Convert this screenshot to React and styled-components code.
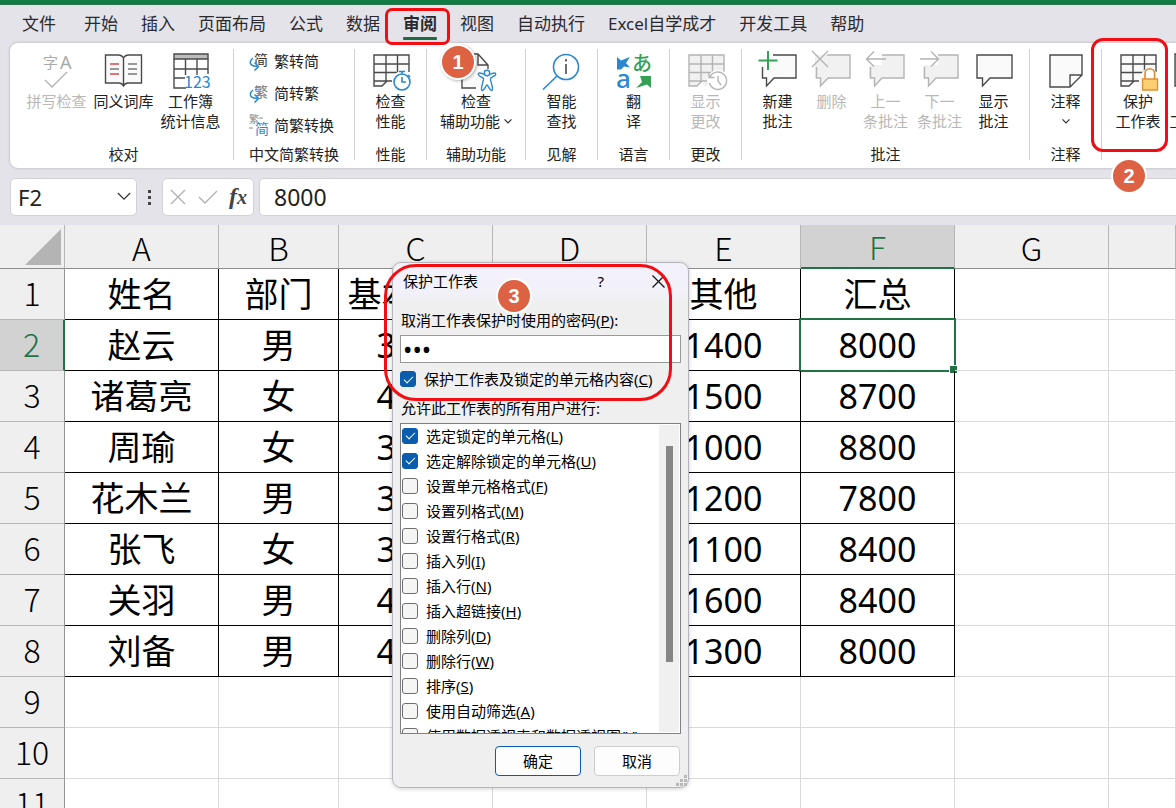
import React from "react";
import styled, { createGlobalStyle, css } from "styled-components";

const sans = '"Noto Sans", "Noto Sans CJK SC", sans-serif';
const cjk = '"Noto Sans CJK SC", "Noto Sans", sans-serif';
const green = "#217346";

const GlobalStyle = createGlobalStyle`
  * { box-sizing: border-box; }
  body { margin: 0; background: #fff; font-family: ${sans}; color: #222; }
  button, input { font: inherit; color: inherit; }
  button { background: none; border: 0; padding: 0; }
`;

const Window = styled.div`
  position: relative;
  display: flex;
  flex-direction: column;
  height: 100vh;
  overflow: hidden;
  background: #e4e3ea;
`;

const TopStrip = styled.header`
  flex: none;
  height: 5px;
  background: #107c41;
  border-bottom: 1px solid #2c7350;
`;

const TabBar = styled.nav`
  flex: none;
  display: flex;
  align-items: stretch;
  gap: 23px;
  height: 38px;
  padding-left: 22px;
`;

const Tab = styled.button`
  position: relative;
  flex: none;
  font-size: 17px;
  line-height: 36px;
  white-space: nowrap;
  color: #2a2a2e;
  &:first-child { margin-right: 5px; }
  ${(p) => p.$active && css`
    font-weight: 700;
    &::after {
      content: "";
      position: absolute;
      left: 0;
      right: 0;
      bottom: 3px;
      height: 3px;
      border-radius: 1px;
      background: #1c6b41;
    }
  `}
`;

const Ribbon = styled.section`
  flex: none;
  display: flex;
  height: 125px;
  margin-left: 10px;
  padding: 6px 0 8px;
  background: #fff;
  border-radius: 8px 0 0 8px;
  box-shadow: 0 0 3px rgba(0, 0, 0, 0.25);
  overflow: hidden;
`;

const Group = styled.div`
  flex: none;
  display: flex;
  flex-direction: column;
  align-items: ${(p) => (p.$open ? "flex-start" : "center")};
  justify-content: space-between;
  width: ${(p) => p.$width}px;
  padding-left: ${(p) => p.$indent || 0}px;
  border-right: ${(p) => (p.$open ? 0 : "1px solid #d0d0d0")};
`;

const GroupItems = styled.div`
  display: flex;
`;

const GroupLabel = styled.div`
  font-size: 15px;
  line-height: 12px;
`;

const BigButton = styled.button`
  flex: none;
  display: flex;
  flex-direction: column;
  align-items: center;
  width: ${(p) => p.$width || 54}px;
  padding-top: 1px;
  font-size: 15px;
  line-height: 20px;
  white-space: nowrap;
  color: ${(p) => (p.disabled ? "#b8b8b8" : "#222")};
`;

const BigIcon = styled.svg`
  display: block;
  flex: none;
  width: 44px;
  height: 41px;
  overflow: visible;
  fill: none;
  stroke: ${(p) => (p.$muted ? "#b4b4b4" : "#4a4a4a")};
  stroke-width: 1.4;
  text { stroke: none; }
`;

const LabelLine = styled.span`
  display: flex;
  align-items: center;
  gap: 4px;
  min-height: 20px;
`;

const SmallList = styled.div`
  display: flex;
  flex-direction: column;
  gap: 8px;
  width: 90px;
`;

const SmallButton = styled.button`
  display: flex;
  align-items: center;
  gap: 5px;
  height: 24px;
  font-size: 15px;
  line-height: 22px;
  white-space: nowrap;
  svg { width: 20px; height: 22px; overflow: visible; flex: none; }
`;

const FormulaBar = styled.section`
  flex: none;
  display: flex;
  align-items: center;
  height: 57px;
  padding: 0 0 0 10px;
`;

const barBox = css`
  display: flex;
  align-items: center;
  height: 38px;
  background: #fff;
  border: 1px solid #d2d1d8;
  border-radius: 5px;
`;

const NameBox = styled.div`
  ${barBox}
  width: 127px;
  padding: 0 5px 0 7px;
  input {
    flex: 1;
    min-width: 0;
    border: 0;
    padding: 0;
    font-size: 22px;
    outline: 0;
    background: none;
  }
`;

const BarDots = styled.svg`
  width: 25px;
  height: 38px;
  flex: none;
`;

const FxBox = styled.div`
  ${barBox}
  width: 92px;
  margin-right: 5px;
  padding: 0 6px;
  justify-content: space-between;
  button { display: flex; }
`;

const FxMark = styled.span`
  font: italic 700 24px/30px "Liberation Serif", serif;
  color: #444;
  small { font-size: 20px; }
`;

const FormulaBox = styled.div`
  ${barBox}
  flex: 1;
  padding-left: 14px;
  border-radius: 5px 0 0 5px;
  border-right: 0;
  input {
    width: 100%;
    border: 0;
    padding: 0;
    font-size: 23px;
    outline: 0;
    background: none;
  }
`;

const Sheet = styled.main`
  flex: 1;
  min-height: 0;
  overflow: hidden;
  background: #fff;
`;

const Grid = styled.table`
  width: 100%;
  table-layout: fixed;
  border-collapse: separate;
  border-spacing: 0;
  color: #000;
`;

const HeadCell = styled.th`
  height: ${(p) => (p.$row ? 51 : 44)}px;
  padding: 0 0 ${(p) => (p.$row ? 4 : 0)}px;
  font-family: ${cjk};
  font-size: 32px;
  font-weight: 300;
  line-height: 40px;
  text-align: center;
  vertical-align: middle;
  color: ${(p) => (p.$on ? green : "#000")};
  background: ${(p) => (p.$on ? "#d2d2d2" : "#efefef")};
  border-right: 1px solid ${(p) => (p.$row ? "#949494" : "#b6b6b6")};
  border-bottom: 1px solid ${(p) => (p.$row ? "#b6b6b6" : "#8c8c8c")};
  ${(p) => p.$on && p.$row && `border-right: 2px solid ${green};`}
  ${(p) => p.$on && !p.$row && `border-bottom: 2px solid ${green};`}
`;

const Corner = styled.svg`
  display: block;
  width: 64px;
  height: 43px;
`;

const Cell = styled.td`
  position: relative;
  height: 51px;
  padding: 0 0 1px;
  font-size: 34px;
  line-height: 44px;
  text-align: center;
  vertical-align: middle;
  white-space: nowrap;
  border-right: 1px solid ${(p) => (p.$data ? "#000" : "#dadada")};
  border-bottom: 1px solid ${(p) => (p.$data ? "#000" : "#dadada")};
`;

const Selection = styled.span`
  position: absolute;
  inset: -2px;
  border: 2px solid ${green};
  &::after {
    content: "";
    position: absolute;
    right: -4px;
    bottom: -4px;
    width: 7px;
    height: 7px;
    background: ${green};
    border: 1px solid #fff;
  }
`;

const Dialog = styled.form`
  position: absolute;
  left: 392px;
  top: 262px;
  width: 297px;
  display: flex;
  flex-direction: column;
  padding: 0 7px 11px;
  background: linear-gradient(#f3f1f9 0, #f2f0f8 30px, #efefef 40px);
  border: 1px solid #b5b5bb;
  border-radius: 9px;
  box-shadow: 0 1px 4px rgba(0, 0, 0, 0.18);
  font-size: 15px;
  line-height: 20px;
  color: #000;
`;

const TitleRow = styled.div`
  display: flex;
  align-items: center;
  height: 36px;
  padding: 0 16px 0 3px;
  h2 { flex: 1; margin: 0; font-size: 15px; font-weight: 400; }
  button { display: flex; }
`;

const HelpButton = styled.button`
  margin-right: 48px;
`;

const FieldLabel = styled.label`
  display: block;
  height: 36px;
  padding-top: 11px;
  padding-left: 1px;
`;

const Password = styled.input`
  width: 281px;
  height: 28px;
  padding: 0 2px;
  border: 1px solid #999;
  background: #fff;
  font-size: 25px;
  outline: 0;
`;

const Check = styled.input`
  appearance: none;
  flex: none;
  display: grid;
  place-items: center;
  width: 16px;
  height: 16px;
  margin: 0;
  border: 1px solid #6e6e6e;
  border-radius: 3px;
  background: #f5f5f5;
  &:checked { background: #0a5cad; border-color: #0a5cad; }
  &:checked::after {
    content: "";
    width: 8px;
    height: 4px;
    margin-bottom: 2px;
    border-left: 1px solid #fff;
    border-bottom: 1px solid #fff;
    transform: rotate(-45deg);
  }
`;

const CheckRow = styled.label`
  flex: none;
  display: flex;
  align-items: center;
  gap: 8px;
  height: ${(p) => (p.$main ? 32 : 25)}px;
  white-space: nowrap;
`;

const ListCaption = styled.div`
  height: 28px;
  padding-top: 3px;
  padding-left: 1px;
`;

const ListBox = styled.div`
  display: flex;
  width: 281px;
  height: 311px;
  border: 1px solid #7f8083;
  background: #fff;
  overflow: hidden;
`;

const Options = styled.div`
  flex: 1;
  display: flex;
  flex-direction: column;
  margin-top: -1px;
  padding-left: 1px;
`;

const ScrollTrack = styled.div`
  width: 20px;
  margin: 1px;
  padding: 21px 6px 0 7px;
  background: #f0f0f0;
`;

const ScrollThumb = styled.div`
  height: 216px;
  background: #868686;
`;

const Actions = styled.div`
  display: flex;
  justify-content: flex-end;
  gap: 13px;
  padding: 12px 1px 0 0;
`;

const ActionButton = styled.button`
  width: 86px;
  height: 30px;
  background: #fdfdfd;
  border: 1px solid ${(p) => (p.$primary ? "#0a5cad" : "#cdcdcd")};
  border-radius: 4px;
`;

const Grip = styled.svg`
  position: absolute;
  right: 1px;
  bottom: 1px;
  width: 12px;
  height: 12px;
  fill: #b9b9b9;
`;

const Frame = styled.div`
  position: absolute;
  left: ${(p) => p.$x}px;
  top: ${(p) => p.$y}px;
  width: ${(p) => p.$w}px;
  height: ${(p) => p.$h}px;
  border: 3px solid #f20d12;
  border-radius: ${(p) => p.$r}px;
  pointer-events: none;
`;

const Marker = styled.div`
  position: absolute;
  left: ${(p) => p.$x}px;
  top: ${(p) => p.$y}px;
  width: 36px;
  height: 36px;
  border: 2px solid #fff;
  border-radius: 50%;
  background: #dc6243;
  box-shadow: ${(p) => (p.$raised ? "1px 1px 3px rgba(0, 0, 0, 0.3)" : "none")};
  color: #fff;
  font: 700 20px/32px "Liberation Sans", sans-serif;
  text-align: center;
`;

const Chevron = ({ size = 8 }) => (
  <svg width={size} height={size} viewBox="0 0 8 8" fill="none" stroke="#333" strokeWidth={size > 10 ? 0.7 : 1.2}>
    <path d="M.5 2.3 4 5.8 7.5 2.3" />
  </svg>
);

const TableShape = ({ muted }) => (
  <>
    <path d="M5 5H40V36H20L18 31 14 36H5Z" fill={muted ? "#f1f1f1" : "#fafafa"} stroke="none" />
    <path d="M40 22V5H5V36H13L18 31H23M5 14H40M5 22.500H30M5 31H18M17 5V31M28.500 5V25" />
  </>
);

const Balloon = ({ muted, cut }) => (
  <>
    <path d="M5 5H40V28H18L10.500 36V28H5Z" fill={muted ? "#f1f1f1" : "#fafafa"} stroke="none" />
    <path d={cut ? "M17 5H40V28H18L10.500 36V28H6.500V17" : "M5 5H40V28H18L10.500 36V28H5Z"} />
  </>
);

const drawings = {
  spelling: (
    <>
      <text x="8" y="18" fontSize="15" fill="#a9a9a9" fontFamily={cjk}>字</text>
      <text x="25" y="19" fontSize="18" fill="#a9a9a9" fontFamily={sans}>A</text>
      <path d="M10 30 17 37 32 22" />
    </>
  ),
  book: (
    <>
      <path d="M21.500 8Q20 5 16 5H3.500V33H17Q20 33 21.500 36Q23 33 26 33H39.500V5H27Q23 5 21.500 8V35" fill="#fafafa" />
      <path d="M8 14H17M8 24H17" stroke="#d8494f" />
      <path d="M8 19H17M26 14H35M26 19H35M26 24H35" stroke="#777" />
    </>
  ),
  stats: (
    <>
      <path d="M5 4H39V9H5Z" fill="#bdbdbd" />
      <path d="M5 9V38H17M39 9V24M5 19H39M5 28H16M16.500 9V25M28 9V25" />
      <text x="15" y="38" fontSize="16" fill="#2b88d0" fontFamily={cjk}>123</text>
    </>
  ),
  perf: (
    <>
      <TableShape />
      <circle cx="33" cy="31" r="10" fill="#fff" stroke="none" />
      <g stroke="#2b88d0" strokeWidth="1.6">
        <circle cx="33" cy="32" r="8" fill="#fff" />
        <path d="M33 27V32H37M30 21.500H36M33 21.500V24M39 25 41 27" />
      </g>
    </>
  ),
  access: (
    <>
      <path d="M8 4H24L34 15V38H8Z" fill="#fafafa" stroke="none" />
      <path d="M22 38H8V4H24L34 15V19M24 4V15H34" />
      <path d="M33 25C29 25 26 21.500 24.500 23.500S29 27.500 29.500 28.500 26 40 28 40.500 32 35 33 35 36 41 38 40.500 36 30 36.500 28.500 43 25.500 41.500 23.500 37 25 33 25Z" fill="#fff" stroke="#2b88d0" />
      <circle cx="33" cy="23" r="2.700" fill="#fff" stroke="#2b88d0" />
    </>
  ),
  lookup: (
    <>
      <g stroke="#2b88d0" strokeWidth="1.600"><circle cx="26" cy="17" r="12.500" /><path d="M17 26 3 39.500" /></g>
      <path d="M26 14V24M26 9V11.500" strokeWidth="1.600" />
    </>
  ),
  translate: (
    <>
      <path d="M5 7 9 10.500 18 7 14 13 18 17.500 12 16.500 9 19.500H5Z" fill="#2b88d0" stroke="none" />
      <text x="20" y="21" fontSize="20" fontWeight="500" fill="#35a056" fontFamily={cjk}>あ</text>
      <text x="4" y="38" fontSize="26" fontWeight="500" fill="#2b88d0" fontFamily={sans}>a</text>
      <path d="M28 26H39V38L35 34.500 24 38 30 32Z" fill="#35a056" stroke="none" />
    </>
  ),
  changes: (
    <>
      <TableShape muted />
      <circle cx="34" cy="31" r="11" fill="#fff" stroke="none" />
      <path d="M26 27A8.700 8.700 0 1 1 25.500 33M25 22V27.500H30.500M34 26V31L37 35" />
    </>
  ),
  newNote: <><Balloon cut /><path d="M12 1V20M2.500 10.500H21.500" stroke="#35a056" strokeWidth="2" /></>,
  remove: <><Balloon muted cut /><path d="M2 1 18 17M18 1 2 17" /></>,
  previous: <><Balloon muted cut /><path d="M0 0H18V15H0Z" fill="#fff" stroke="none" /><path d="M22 9H3M10 1.500 2.500 9 10 16.500" /></>,
  next: <><Balloon muted cut /><path d="M0 0H20V15H0Z" fill="#fff" stroke="none" /><path d="M2 9H21M13 1.500 20.500 9 13 16.500" /></>,
  show: <Balloon />,
  note: (
    <path d="M6 5H38V25L26 37H6ZM38 25H26V37" fill="#fafafa" />
  ),
  protect: (
    <>
      <TableShape />
      <path d="M25 40V24Q33 12 42 24V40Z" fill="#fff" stroke="none" />
      <path d="M29 29V23.500A4.800 4.800 0 0 1 38.600 23.500V29" stroke="#d98a2b" strokeWidth="1.600" />
      <path d="M26.500 29H41.500V40H26.500Z" fill="#fbcf72" stroke="#e0902f" />
    </>
  ),
  workbook: <path d="M5 4H39V36H5Z" fill="#c9c6cc" />,
};

const Tool = ({ icon, lines, width, disabled, menu }) => (
  <BigButton type="button" $width={width} disabled={disabled}>
    <BigIcon viewBox="0 0 44 41" $muted={disabled} aria-hidden="true">{drawings[icon]}</BigIcon>
    {lines.map((line, i) => (
      <LabelLine key={i}>
        {line}
        {menu && i === lines.length - 1 && <Chevron />}
      </LabelLine>
    ))}
  </BigButton>
);

const MenuTool = ({ icon, label }) => (
  <BigButton type="button">
    <BigIcon viewBox="0 0 44 41" aria-hidden="true">{drawings[icon]}</BigIcon>
    <LabelLine>{label}</LabelLine>
    <LabelLine><Chevron /></LabelLine>
  </BigButton>
);

const groups = [
  { label: "校对", width: 224, indent: 4, tools: [
    { icon: "spelling", lines: ["拼写检查"], width: 67, disabled: true },
    { icon: "book", lines: ["同义词库"], width: 67 },
    { icon: "stats", lines: ["工作簿", "统计信息"], width: 67 },
  ] },
  { label: "中文简繁转换", width: 121, convert: true },
  { label: "性能", width: 72, tools: [{ icon: "perf", lines: ["检查", "性能"] }] },
  { label: "辅助功能", width: 99, tools: [{ icon: "access", lines: ["检查", "辅助功能"], width: 80, menu: true }] },
  { label: "见解", width: 72, tools: [{ icon: "lookup", lines: ["智能", "查找"] }] },
  { label: "语言", width: 72, tools: [{ icon: "translate", lines: ["翻", "译"] }] },
  { label: "更改", width: 72, tools: [{ icon: "changes", lines: ["显示", "更改"], disabled: true }] },
  { label: "批注", width: 288, tools: [
    { icon: "newNote", lines: ["新建", "批注"] },
    { icon: "remove", lines: ["删除"], disabled: true },
    { icon: "previous", lines: ["上一", "条批注"], disabled: true },
    { icon: "next", lines: ["下一", "条批注"], disabled: true },
    { icon: "show", lines: ["显示", "批注"] },
  ] },
  { label: "注释", width: 72, menuTool: { icon: "note", label: "注释" } },
  { width: 120, indent: 9, open: true, tools: [
    { icon: "protect", lines: ["保护", "工作表"] },
    { icon: "workbook", lines: ["保护", "工作簿"] },
  ] },
];

const TurnArrow = () => (
  <g fill="none">
    <path d="M4 8C0 11 0 16 8 16.500" stroke="#fff" strokeWidth="4" />
    <path d="M4 8C0 11 0 16 8 16.500M5.500 12.500 9.500 16.500 5.500 20.500" stroke="#2b88d0" strokeWidth="1.500" />
  </g>
);

const conversions = [
  { text: "繁转简", icon: <><text x="5" y="15" fontSize="14" fill="#333" fontFamily={cjk}>简</text><TurnArrow /></> },
  { text: "简转繁", icon: <><text x="5" y="15" fontSize="14" fill="#777" fontFamily={cjk}>繁</text><TurnArrow /></> },
  { text: "简繁转换", icon: <><text x="0" y="9" fontSize="10" fill="#888" fontFamily={cjk}>繁</text><path d="M10 4H14M0 14H4" stroke="#888" /><text x="6" y="20" fontSize="14" fill="#2b88d0" fontFamily={cjk}>简</text></> },
];

const tabs = ["文件", "开始", "插入", "页面布局", "公式", "数据", "审阅", "视图", "自动执行", "Excel自学成才", "开发工具", "帮助"];

const columns = ["A", "B", "C", "D", "E", "F", "G", ""];
const columnWidths = [154, 120, 154, 154, 154, 154, 154];
const rows = [
  ["姓名", "部门", "基本工资", "", "其他", "汇总"],
  ["赵云", "男", "3600", "", "1400", "8000"],
  ["诸葛亮", "女", "4200", "", "1500", "8700"],
  ["周瑜", "女", "3800", "", "1000", "8800"],
  ["花木兰", "男", "3600", "", "1200", "7800"],
  ["张飞", "女", "3800", "", "1100", "8400"],
  ["关羽", "男", "4000", "", "1600", "8400"],
  ["刘备", "男", "4200", "", "1300", "8000"],
  [], [], [],
];

const permissions = [
  ["选定锁定的单元格", "L", true],
  ["选定解除锁定的单元格", "U", true],
  ["设置单元格格式", "F"],
  ["设置列格式", "M"],
  ["设置行格式", "R"],
  ["插入列", "I"],
  ["插入行", "N"],
  ["插入超链接", "H"],
  ["删除列", "D"],
  ["删除行", "W"],
  ["排序", "S"],
  ["使用自动筛选", "A"],
  ["使用数据透视表和数据透视图", "V"],
];

const Caption = ({ text, hotkey, end = "" }) => (
  <span>{text}(<u>{hotkey}</u>){end}</span>
);

const ProtectDialog = () => (
  <Dialog role="dialog" aria-labelledby="protect-title" onSubmit={(e) => e.preventDefault()}>
    <TitleRow>
      <h2 id="protect-title">保护工作表</h2>
      <HelpButton type="button">?</HelpButton>
      <button type="button" aria-label="关闭">
        <svg width="13" height="13" viewBox="0 0 13 13" stroke="#111" strokeWidth="1.200"><path d="M.5.5 12.500 12.500M12.500.5.5 12.500" /></svg>
      </button>
    </TitleRow>
    <FieldLabel htmlFor="protect-password"><Caption text="取消工作表保护时使用的密码" hotkey="P" end=":" /></FieldLabel>
    <Password id="protect-password" type="password" defaultValue="123" autoComplete="off" />
    <CheckRow $main>
      <Check type="checkbox" defaultChecked />
      <Caption text="保护工作表及锁定的单元格内容" hotkey="C" />
    </CheckRow>
    <ListCaption>允许此工作表的所有用户进行:</ListCaption>
    <ListBox>
      <Options>
        {permissions.map(([text, hotkey, on]) => (
          <CheckRow key={text}>
            <Check type="checkbox" defaultChecked={Boolean(on)} />
            <Caption text={text} hotkey={hotkey} />
          </CheckRow>
        ))}
      </Options>
      <ScrollTrack><ScrollThumb /></ScrollTrack>
    </ListBox>
    <Actions>
      <ActionButton type="submit" $primary>确定</ActionButton>
      <ActionButton type="button">取消</ActionButton>
    </Actions>
    <Grip viewBox="0 0 12 12" aria-hidden="true">
      <path d="M9 1h3v3h-3zM5 5h3v3h-3zM9 5h3v3h-3zM1 9h3v3h-3zM5 9h3v3h-3zM9 9h3v3h-3z" />
    </Grip>
  </Dialog>
);

export default function App() {
  return (
    <Window>
      <GlobalStyle />
      <TopStrip />
      <TabBar>
        {tabs.map((tab) => <Tab key={tab} type="button" $active={tab === "审阅"}>{tab}</Tab>)}
      </TabBar>
      <Ribbon>
        {groups.map((group, i) => (
          <Group key={i} $width={group.width} $indent={group.indent} $open={group.open}>
            {group.convert && (
              <SmallList>
                {conversions.map((item) => (
                  <SmallButton key={item.text} type="button">
                    <svg viewBox="0 0 20 22" aria-hidden="true">{item.icon}</svg>
                    {item.text}
                  </SmallButton>
                ))}
              </SmallList>
            )}
            {group.tools && (
              <GroupItems>
                {group.tools.map((tool) => <Tool key={tool.icon} {...tool} />)}
              </GroupItems>
            )}
            {group.menuTool && <MenuTool {...group.menuTool} />}
            {group.label && <GroupLabel>{group.label}</GroupLabel>}
          </Group>
        ))}
      </Ribbon>
      <FormulaBar>
        <NameBox>
          <input aria-label="名称框" defaultValue="F2" />
          <button type="button" aria-label="展开"><Chevron size={14} /></button>
        </NameBox>
        <BarDots viewBox="0 0 25 38" fill="#444" aria-hidden="true">
          <path d="M11 12h3v3h-3zM11 18h3v3h-3zM11 24h3v3h-3z" />
        </BarDots>
        <FxBox>
          <button type="button" aria-label="取消输入">
            <svg width="18" height="18" viewBox="0 0 18 18" stroke="#b0b0b0" strokeWidth="1.400"><path d="M2 2 16 16M16 2 2 16" /></svg>
          </button>
          <button type="button" aria-label="输入">
            <svg width="20" height="18" viewBox="0 0 20 18" fill="none" stroke="#b0b0b0" strokeWidth="1.400"><path d="M1 9 7 15 19 3" /></svg>
          </button>
          <button type="button" aria-label="插入函数"><FxMark>f<small>x</small></FxMark></button>
        </FxBox>
        <FormulaBox><input aria-label="编辑栏" defaultValue="8000" /></FormulaBox>
      </FormulaBar>
      <Sheet>
        <Grid>
          <colgroup>
            <col width="65" />
            {columnWidths.map((w, i) => <col key={i} width={w} />)}
            <col />
          </colgroup>
          <thead>
            <tr>
              <HeadCell>
                <Corner viewBox="0 0 64 43" aria-hidden="true"><path d="M61 4V40H25Z" fill="#b4b4b4" /></Corner>
              </HeadCell>
              {columns.map((name, i) => <HeadCell key={i} $on={name === "F"}>{name}</HeadCell>)}
            </tr>
          </thead>
          <tbody>
            {rows.map((row, r) => (
              <tr key={r}>
                <HeadCell $row $on={r === 1}>{r + 1}</HeadCell>
                {columns.map((name, c) => (
                  <Cell key={c} $data={r < 8 && c < 6}>
                    {row[c]}
                    {r === 1 && name === "F" && <Selection />}
                  </Cell>
                ))}
              </tr>
            ))}
          </tbody>
        </Grid>
      </Sheet>
      <ProtectDialog />
      <Frame $x={385} $y={8} $w={65} $h={37} $r={7} />
      <Frame $x={1091} $y={38} $w={77} $h={114} $r={12} />
      <Frame $x={384} $y={264} $w={288} $h={137} $r={32} />
      <Marker $x={440} $y={44} $raised>1</Marker>
      <Marker $x={1111} $y={158}>2</Marker>
      <Marker $x={496} $y={278}>3</Marker>
    </Window>
  );
}
